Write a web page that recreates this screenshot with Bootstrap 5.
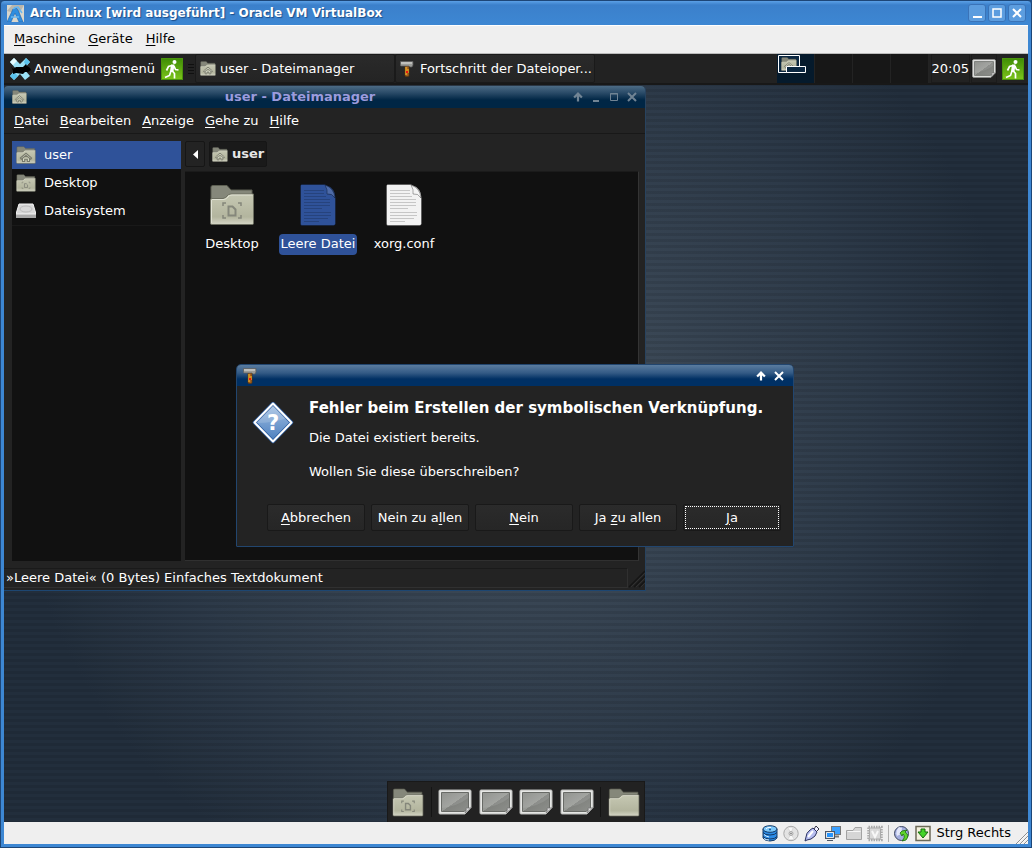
<!DOCTYPE html>
<html lang="de">
<head>
<meta charset="utf-8">
<meta name="viewport" content="width=device-width, initial-scale=1">
<title>Arch Linux [wird ausgeführt] - Oracle VM VirtualBox</title>
<link href="https://cdn.jsdelivr.net/npm/bootstrap@5.3.0/dist/css/bootstrap.min.css" rel="stylesheet">
<style>
body { font-family: "DejaVu Sans", sans-serif; font-size: 13px; line-height: 16px; color: #fff; background: #1f4f87; }
u { text-underline-offset: 2px; text-decoration-thickness: 1px; }
a, a:hover { color: inherit; text-decoration: none; }
button { color: inherit; padding: 0; border: 0; background: none; white-space: nowrap; }
svg { display: block; flex: none; }
/* host window */
.host { height: 100vh; border: 1px solid #1d4677; border-radius: 4px 4px 0 0; background: linear-gradient(#5ba0e6, #3b80cb 4px, #3d87d3 24px); padding: 0 3px 3px; }
.host-title { height: 24px; gap: 6px; padding: 0 2px 0 3px; font-size: 12px; font-weight: bold; text-shadow: 1px 1px 1px #1b4c88; }
.host-controls { gap: 2px; }
.host-btn { width: 18px; height: 18px; border: 1px solid #3a73b8; border-radius: 3px; background: #5c9ddf; }
.host-menu { height: 28px; gap: 13px; padding: 0 10px 2px; background: #efefef; color: #000; border-top: 1px solid #fff; }
.host-status { height: 22px; gap: 5px; background: #efefef; color: #000; }
.vsep { width: 1px; height: 17px; background: #b0b0b0; }
/* guest screen */
.screen { min-height: 0; background:
  repeating-linear-gradient(rgba(0,0,0,.09) 0 3px, transparent 3px 6px),
  radial-gradient(circle 505px at 50% 48%, #3f4f5e, #3a4755 30%, #2d3a49 70%, #222e3c 100%); }
.taskpanel { height: 32px; background: #222; border-top: 1px solid #bbb; border-bottom: 2px solid #181818; }
.appmenu { margin-right: 6px; }
.task { width: 200px; border: 1px solid #1a1a1a; border-radius: 2px; background: linear-gradient(#2a2a2a, #242424); }
.pager { width: 152px; margin-right: 2px; }
.pager-cell { background: #171717; border-right: 1px solid #232323; }
.pager-cell.current { background: #051a2c; }
.tray { border: 1px solid #1b1b1b; margin-right: 1px; }
.guest-win { background: #232323; position: absolute; }
.guest-title { height: 22px; font-weight: bold; color: #9b9bdd; }
.title-off { color: #718494; }
.fm { left: 0; top: 33px; width: 642px; height: 505px; border-right: 1px solid #28435f; border-bottom: 1px solid #1d4671; border-radius: 4px 4px 0 0; }
.fm .guest-title { border-radius: 4px 4px 0 0; background: linear-gradient(#4c6b85 0, #294a67 7px, #002645 14px); }
.fm-menu { height: 26px; gap: 11px; padding: 0 10px; border-bottom: 1px solid #181818; }
.fm-body { padding: 7px 6px 0 8px; }
.places { width: 169px; background: #111; }
.places hr { border-color: #333; }
.place { height: 28px; width: 100%; text-align: left; }
.place.selected, .iconlabel.selected { background: #2f5299; }
.pathbtn { height: 26px; padding: 0 2px; border: 1px solid #161616; border-radius: 2px; color: #e6e6e6; }
.pathbtn.current { background: #1a1a1a; }
.pane { background: #111; border-top: 1px solid #1b1b1b; border-right: 1px solid #343434; border-bottom: 1px solid #303030; }
.pane-item { width: 86px; }
.pane-icon { height: 50px; margin-bottom: 4px; }
.pane-icon.blue { color: #2f5299; }
.pane-icon.paper { color: #f2f2f2; }
.iconlabel { padding: 2px 2px 3px; border-radius: 4px; white-space: nowrap; }
.fm-status { height: 20px; padding-left: 2px; border-top: 1px solid #1a1a1a; border-right: 1px solid #303030; border-bottom: 1px solid #303030; }
.fm-foot { padding: 7px 0 2px; }
.dialog-win { left: 232px; top: 311px; width: 558px; height: 183px; border: 1px solid #22466f; border-radius: 5px 5px 1px 1px; }
.dialog-win .guest-title { height: 21px; padding: 0 9px 0 6px; border-radius: 4px 4px 0 0; background: linear-gradient(#5a7c9f 0, #335a85 8px, #003064 14px); }
.dlg-body { padding: 12px 0 0 15px; gap: 15px; }
.dlg-head { font-size: 15px; line-height: 20px; font-weight: bold; white-space: nowrap; margin-bottom: 12px; }
.dlg-body p { margin-bottom: 18px; }
.dlg-actions { gap: 6px; padding: 0 12px 15px 0; }
.dlg-btn { width: 98px; height: 27px; border: 1px solid #191919; border-radius: 2px; background: linear-gradient(#2b2b2b, #262626); }
.dlg-btn.focused { outline: 1px dotted #fff; outline-offset: -3px; }
.dock { height: 41px; width: 258px; background: #222; border: 1px solid #191919; border-bottom: 0; }
.dock-sep { width: 1px; height: 30px; background: #141414; }
</style>
</head>
<body>
<svg width="0" height="0" class="position-absolute" aria-hidden="true">
  <defs>
    <linearGradient id="gFold" x2="0" y2="1"><stop stop-color="#c6c8b3"/><stop offset=".75" stop-color="#b3b59e"/><stop offset="1" stop-color="#d5d6c6"/></linearGradient>
    <linearGradient id="gDesk" x2="1" y2="1"><stop stop-color="#858783"/><stop offset=".5" stop-color="#999b97"/><stop offset=".51" stop-color="#80827e"/><stop offset="1" stop-color="#8d8f8b"/></linearGradient>
    <linearGradient id="gExit" x2="0" y2="1"><stop stop-color="#3f8d05"/><stop offset="1" stop-color="#7cc41b"/></linearGradient>
    <linearGradient id="gQ" x2="0" y2="1"><stop stop-color="#a5c2e4"/><stop offset="1" stop-color="#4a7dbd"/></linearGradient>
    <symbol id="folder" viewBox="0 0 46 42" preserveAspectRatio="none">
      <path d="M2 40V3Q2 1.500 4 1.500H18L22 6H43V40Z" fill="#85877a" stroke="#5d5f52"/>
      <path d="M1.500 39.500V16Q1.500 14.500 3 14.500H14Q17 14 18 12Q19 10 22 10H44.500V39.500Q44.500 40.500 43 40.500H3Q1.500 40.500 1.500 39.500Z" fill="url(#gFold)" stroke="#6c6e60"/>
      <path d="M2.500 39V16Q2.500 15.500 4 15.500H15Q18 15 19 13Q20 11 23 11H43.500" fill="none" stroke="#e0e1d3"/>
    </symbol>
    <symbol id="folderdoc" viewBox="0 0 46 42" preserveAspectRatio="none">
      <use href="#folder" width="46" height="42"/>
      <path d="M19.500 22.500H23.500L26.500 25.500V31.500H19.500Z" fill="none" stroke="#85877b" stroke-width="2"/>
      <path d="M14 22V19H17M29 19H32V22M32 31V34H29M17 34H14V31" fill="none" stroke="#85877b" stroke-width="1.500"/>
    </symbol>
    <symbol id="folderhome" viewBox="0 0 46 42" preserveAspectRatio="none">
      <use href="#folder" width="46" height="42"/>
      <path d="M10 28 23 17 36 28 34 31 23 22 12 31ZM15 29V36H20V31H26V36H31V29" fill="#dcdecb" stroke="#77796b" stroke-width="2.500"/>
    </symbol>
    <symbol id="desk" viewBox="0 0 34 26" preserveAspectRatio="none">
      <path d="M1 2Q1 1 2 1H32Q33 1 33 2V19L27 25H2Q1 25 1 24Z" fill="#e6e7e5" stroke="#b9bab8"/>
      <path d="M3.500 3.500H30.500V19L26 22.500H3.500Z" fill="url(#gDesk)" stroke="#686a66"/>
      <path d="M4 19Q20 17 30 9V4H4Z" fill="#fff" opacity=".1"/>
      <path d="M27 24Q29 21 28 19H33Z" fill="#ddd" stroke="#777" stroke-width=".8"/>
    </symbol>
    <symbol id="exit" viewBox="0 0 22 22">
      <rect x=".5" y=".5" width="21" height="21" fill="url(#gExit)" stroke="#4a930c"/>
      <circle cx="13.500" cy="4" r="2" fill="#fff"/>
      <path d="M11 7.500 7.500 8.500 5.500 12.500M10.500 12 13.500 15.500 13.500 20.500M10 13 8.500 17.500 4 19.500M13 8 14.500 11.500 17.500 12" fill="none" stroke="#fff" stroke-width="1.700"/>
      <path d="M10 6.500H13.500L12.500 13.500H9Z" fill="#fff"/>
    </symbol>
    <symbol id="hammer" viewBox="0 0 14 16">
      <path d="M5 5H9V15Q7 16 5 15Z" fill="#a4611c" stroke="#5a340d" stroke-width=".7"/>
      <path d="M6 6V14M8 8V12" stroke="#ffbf2c"/><path d="M6 10H8V12H6Z" fill="#e11"/>
      <path d="M.5.5H13V4L12 6H10L9 5H1Q0 5 .5 3Z" fill="#9b9c98" stroke="#5b5b5b" stroke-width=".7"/><path d="M1 2H12" stroke="#e2e2e0"/>
    </symbol>
    <symbol id="page" viewBox="0 0 38 44">
      <path d="M2.500 1.500H26Q36.500 5 36.500 15V40.500Q36.500 42.500 34.500 42.500H3Q1.500 42.500 1.500 41V3Q1.500 1.500 2.500 1.500Z" fill="currentColor" stroke="#000" stroke-opacity=".25"/>
      <path d="M5 7.500H25M5 10.500H25M5 13.500H27M5 16.500H31M5 19.500H31M5 22.500H31M5 25.500H23M5 29.500H32M5 32.500H32M5 35.500H29M5 38.500H20" stroke="#000" stroke-opacity=".18"/>
      <path d="M26 2Q29 7 28 11Q33 10 36 15Q35 5 26 2Z" fill="#fff" fill-opacity=".15" stroke="#000" stroke-opacity=".4" stroke-width=".8"/>
    </symbol>
    <symbol id="up" viewBox="0 0 9 9"><path d="M4.500 8.500V2M1 5 4.500 1.500 8 5" fill="none" stroke="currentColor" stroke-width="2"/></symbol>
    <symbol id="cross" viewBox="0 0 10 10"><path d="M1 1 9 9M9 1 1 9" fill="none" stroke="currentColor" stroke-width="2"/></symbol>
  </defs>
</svg>

<div class="host d-flex flex-column">
  <header class="host-title d-flex align-items-center flex-shrink-0">
    <svg width="17" height="17" viewBox="0 0 17 17"><path d="M0 0H17V17H0Z" fill="#d9d6cc"/><path d="M0 6 5 0H17L12 9Z" fill="#b9b6ac"/><path d="M0 17 6 4Q9 1 11 5L16 17H12L8 8 4 17Z" fill="#2f8ee0" stroke="#1c62ad" stroke-width=".6"/><path d="M4 12H12M6 4Q8 2 11 2L15 8" fill="none" stroke="#69b6ef" stroke-width="1.500"/></svg>
    <span class="flex-grow-1">Arch Linux [wird ausgeführt] - Oracle VM VirtualBox</span>
    <div class="host-controls d-flex">
      <button class="host-btn" aria-label="Minimieren"><svg width="16" height="16"><path d="M4 12H13" stroke="#fff" stroke-width="2"/></svg></button>
      <button class="host-btn" aria-label="Maximieren"><svg width="16" height="16"><path d="M4 4H12V12H4Z" fill="none" stroke="#fff" stroke-width="1.500"/></svg></button>
      <button class="host-btn" aria-label="Schließen"><svg width="16" height="16"><path d="M4 4 12 12M12 4 4 12" stroke="#fff" stroke-width="2"/></svg></button>
    </div>
  </header>
  <nav class="host-menu d-flex align-items-center flex-shrink-0">
    <a href="#"><u>M</u>aschine</a><a href="#"><u>G</u>eräte</a><a href="#"><u>H</u>ilfe</a>
  </nav>

  <main class="screen flex-grow-1 position-relative d-flex flex-column justify-content-between align-items-center">
    <div class="taskpanel w-100 d-flex align-items-center">
      <button class="appmenu d-flex align-items-center ms-1">
        <svg width="26" height="24" viewBox="0 0 26 24"><path d="M2 5 6 1 12 7 18 1 22 5 16 12 22 19 17 23 12 17 6 23 2 19 8 12Z" fill="#9be1f6"/><path d="M2 5 6 1 9 4 5 8Z" fill="#e5fbff"/><path d="M16 5 18 1 22 5 18 9ZM2 19 6 23 10 19 6 15Z" fill="#5ac2ec"/><path d="M3 9 5 12 8 10 15 10 18 7 19 9 22 11 23 13 20 15 17 15 15 17 8 16 5 17 5 14Z" fill="#000"/></svg>
        <span>Anwendungsmenü</span></button>
      <button aria-label="Abmelden"><svg width="22" height="22"><use href="#exit"/></svg></button>
      <svg width="8" height="12" class="ms-1"><path d="M1 1.500H7M1 4.500H7M1 7.500H7M1 10.500H7" stroke="#101010"/></svg>
      <button class="task h-100 d-flex align-items-center px-1"><svg width="16" height="15" class="me-1"><use href="#folderhome"/></svg>user - Dateimanager</button>
      <button class="task h-100 d-flex align-items-center px-1"><svg width="16" height="16" class="me-1" viewBox="1 0 14 16"><use href="#hammer" width="14" height="16"/></svg>Fortschritt der Dateioper...</button>
      <div class="pager h-100 d-flex ms-auto">
        <div class="pager-cell current w-25"><svg width="30" height="20"><path d="M1.500 1.500H22.500V18.500H1.500Z" fill="#0b2741" stroke="#fff"/><use href="#folderhome" x="4" y="3" width="16" height="14"/><path d="M9.500 12.500H28.500V18.500H9.500Z" fill="#0b2741" stroke="#fff"/></svg></div>
        <div class="pager-cell w-25"></div><div class="pager-cell w-25"></div><div class="pager-cell w-25"></div>
      </div>
      <div class="tray h-100 d-flex align-items-center">20:05</div>
      <button class="tray h-100" aria-label="Desktop anzeigen"><svg width="24" height="19"><use href="#desk"/></svg></button>
      <button class="ms-1 me-1" aria-label="Abmelden"><svg width="22" height="22"><use href="#exit"/></svg></button>
    </div>

    <section class="guest-win fm d-flex flex-column">
      <div class="guest-title d-flex align-items-center px-2 flex-shrink-0">
        <svg width="15" height="14"><use href="#folderhome"/></svg>
        <span class="flex-grow-1 text-center">user - Dateimanager</span>
        <div class="title-off d-flex gap-2"><svg width="10" height="10"><use href="#up"/></svg><svg width="10" height="10"><path d="M2 9H8" stroke="currentColor" stroke-width="2"/></svg><svg width="10" height="10"><path d="M1.500 1.500H8.500V8.500H1.500ZM1 2H9" fill="none" stroke="currentColor"/></svg><svg width="10" height="10"><use href="#cross"/></svg></div>
      </div>
      <nav class="fm-menu d-flex align-items-center flex-shrink-0">
        <a href="#"><u>D</u>atei</a><a href="#"><u>B</u>earbeiten</a><a href="#"><u>A</u>nzeige</a><a href="#"><u>G</u>ehe zu</a><a href="#"><u>H</u>ilfe</a>
      </nav>
      <div class="fm-body flex-grow-1 d-flex">
        <aside class="places">
          <button class="place selected d-flex align-items-center px-1"><svg width="20" height="18" class="me-2"><use href="#folderhome"/></svg>user</button>
          <button class="place d-flex align-items-center px-1"><svg width="20" height="18" class="me-2"><use href="#folderdoc"/></svg>Desktop</button>
          <button class="place d-flex align-items-center px-1"><svg width="20" height="16" viewBox="0 0 20 16" class="me-2"><path d="M3 1H17L20 11V15H0V11Z" fill="#d8d8d8"/><path d="M0 11H20V15H0Z" fill="#a9a9a9"/><path d="M3 1H17L20 11H0Z" fill="none" stroke="#f4f4f4"/><ellipse cx="10" cy="6" rx="6" ry="3" fill="none" stroke="#bbb"/></svg>Dateisystem</button>
          <hr class="mt-0 mb-0">
        </aside>
        <div class="flex-grow-1 d-flex flex-column ms-1">
          <div class="d-flex gap-1 mb-1">
            <button class="pathbtn" aria-label="Zurück"><svg width="14" height="12"><path d="M10 2V11L5 6.500Z" fill="#fff"/></svg></button>
            <button class="pathbtn current d-flex align-items-center fw-bold"><svg width="16" height="15" class="me-1"><use href="#folderhome"/></svg>user</button>
          </div>
          <div class="pane flex-grow-1 d-flex align-items-start pt-2 px-1">
            <div class="pane-item d-flex flex-column align-items-center"><div class="pane-icon d-flex align-items-center"><svg width="46" height="42"><use href="#folderdoc"/></svg></div><span class="iconlabel">Desktop</span></div>
            <div class="pane-item d-flex flex-column align-items-center"><div class="pane-icon blue d-flex align-items-center"><svg width="38" height="44"><use href="#page"/></svg></div><span class="iconlabel selected">Leere Datei</span></div>
            <div class="pane-item d-flex flex-column align-items-center"><div class="pane-icon paper d-flex align-items-center"><svg width="38" height="44"><use href="#page"/></svg></div><span class="iconlabel">xorg.conf</span></div>
          </div>
        </div>
      </div>
      <footer class="fm-foot d-flex flex-shrink-0">
        <div class="fm-status d-flex align-items-center flex-grow-1">»Leere Datei« (0 Bytes) Einfaches Textdokument</div>
        <svg width="17" height="20"><path d="M1 19 17 3M6 19 17 8M11 19 17 13" stroke="#151515" stroke-width="1.500"/><path d="M3 19 17 5M8 19 17 10M13 19 17 15" stroke="#303030"/></svg>
      </footer>
    </section>

    <section class="guest-win dialog-win d-flex flex-column" role="dialog" aria-labelledby="dlgHead">
      <div class="guest-title d-flex align-items-center text-white">
        <svg width="14" height="16"><use href="#hammer"/></svg>
        <div class="ms-auto d-flex gap-2"><svg width="10" height="10"><use href="#up"/></svg><svg width="10" height="10"><use href="#cross"/></svg></div>
      </div>
      <div class="dlg-body d-flex">
        <svg width="42" height="44" viewBox="0 1 42 44" class="mt-1"><path d="M21 1.500 39.500 20.500 21 39.500 2.500 20.500Z" transform="translate(0 1)" fill="url(#gQ)" stroke="#2b5b9e" stroke-width="3.500" stroke-linejoin="round"/><path d="M21 2.500 39.500 21.500 21 40.500 2.500 21.500Z" fill="none" stroke="#fff" stroke-width="2" stroke-linejoin="round"/><path d="M4 22Q22 22 35 17L21 4Z" fill="#fff" opacity=".15"/><text x="21" y="29" fill="#fff" font-weight="bold" font-size="21" text-anchor="middle">?</text></svg>
        <div>
          <div id="dlgHead" class="dlg-head">Fehler beim Erstellen der symbolischen Verknüpfung.</div>
          <p>Die Datei existiert bereits.</p>
          <p>Wollen Sie diese überschreiben?</p>
        </div>
      </div>
      <div class="dlg-actions d-flex justify-content-end mt-auto">
        <button class="dlg-btn"><u>A</u>bbrechen</button><button class="dlg-btn">Nein zu a<u>l</u>len</button><button class="dlg-btn"><u>N</u>ein</button><button class="dlg-btn">Ja <u>z</u>u allen</button><button class="dlg-btn focused"><u>J</u>a</button>
      </div>
    </section>

    <div class="dock d-flex align-items-center justify-content-between px-1">
      <svg width="32" height="29"><use href="#folderdoc"/></svg><span class="dock-sep"></span>
      <svg width="34" height="26"><use href="#desk"/></svg><svg width="34" height="26"><use href="#desk"/></svg><svg width="34" height="26"><use href="#desk"/></svg><svg width="34" height="26"><use href="#desk"/></svg>
      <span class="dock-sep"></span><svg width="32" height="29"><use href="#folder"/></svg>
    </div>
  </main>

  <footer class="host-status d-flex align-items-center justify-content-end flex-shrink-0">
    <svg width="16" height="17" viewBox="0 0 16 17"><path d="M1 4V13Q3 16 8 16T15 13V4Z" fill="#2b8be6" stroke="#153a66"/><path d="M1 7.500Q3 10 8 10T15 7.500M1 11.500Q3 14 8 14T15 11.500" fill="none" stroke="#153a66"/><path d="M2 9.500Q4 11.500 7 12M2 13.500Q4 15 7 15" fill="none" stroke="#d8f0ff"/><ellipse cx="8" cy="4" rx="7" ry="3.300" fill="#7cc8fb" stroke="#153a66"/><path d="M4 4Q5 2 9 2.500" stroke="#fff" fill="none"/><circle cx="8" cy="4.500" r="1" fill="#17568f"/></svg>
    <svg width="16" height="17" viewBox="0 0 16 17"><circle cx="8" cy="8.500" r="7.200" fill="#e3e3e3" stroke="#a9a9a9"/><path d="M5 3 8 8 10 3M5 14 8 9 11 14" fill="#f8f8f8" stroke="#ccc" stroke-width=".6"/><circle cx="8" cy="8.500" r="2" fill="#ddd" stroke="#aaa"/><circle cx="8" cy="8.500" r=".8" fill="#777"/></svg>
    <svg width="16" height="17" viewBox="0 0 16 17"><path d="M10 4 12 1 15 4 12 7Z" fill="#eef" stroke="#334"/><path d="M1 16 2 12Q2 8 6 5L9 3 13 7 11 11Q7 15 3 15Z" fill="#b6bdf0" stroke="#2c3360"/><path d="M4 12 9 6" stroke="#fff" stroke-width="2"/></svg>
    <svg width="16" height="17" viewBox="0 0 16 17"><rect x="6.500" y="1.500" width="9" height="8" fill="#3ba0ff" stroke="#777"/><path d="M9 11.500H14" stroke="#777" stroke-width="2"/><rect x=".5" y="6.500" width="9" height="7" fill="#2593fb" stroke="#4c5665"/><path d="M1.500 7.500H8.500V12.500H1.500Z" fill="none" stroke="#e8e8e8"/><path d="M2 15.500H8" stroke="#4c5665"/></svg>
    <svg width="16" height="17" viewBox="0 0 16 17"><path d="M.5 14.500V5.500H7L9 2.500H15.500V14.500Z" fill="#d5d5d5" stroke="#a2a2a2"/><path d="M1.500 6.500H14.500" stroke="#f6f6f6"/></svg>
    <svg width="16" height="17" viewBox="0 0 16 17"><rect x="1.500" y="2" width="13" height="13" fill="none" stroke="#aaa" stroke-width="2.500" stroke-dasharray="1.500 1"/><rect x="2.500" y="3" width="11" height="11" rx="1" fill="#d9d9d9" stroke="#aaa"/><path d="M5 6 8 12 11 6" fill="none" stroke="#f8f8f8" stroke-width="2"/></svg>
    <span class="vsep"></span>
    <svg width="16" height="17" viewBox="0 0 16 17"><circle cx="7.500" cy="8.500" r="7" fill="#a3aede" stroke="#3c4560"/><path d="M5 2Q1 6 3 11L7 9 8 3Z" fill="#e2e6fa"/><path d="M8 6 13 5 11 7Q16 10 12 15L8 16Q12 12 9 9L8 11 6 8Z" fill="#5ed32c" stroke="#1b6b0c" stroke-width=".8"/></svg>
    <svg width="16" height="17" viewBox="0 0 16 17"><rect x="1" y="1.500" width="14" height="14" fill="#f4f1de" stroke="#6d6a58" stroke-width="1.500"/><path d="M6 4H10V7H13L8 13 3 7H6Z" fill="#45d427" stroke="#146c0c"/></svg>
    <span>Strg Rechts</span>
    <svg width="12" height="22"><path d="M0 22 12 10M4 22 12 14M8 22 12 18" stroke="#8f8f8f"/><path d="M1 22 12 11M5 22 12 15M9 22 12 19" stroke="#fff" opacity=".7"/></svg>
  </footer>
</div>
<script src="https://cdn.jsdelivr.net/npm/bootstrap@5.3.0/dist/js/bootstrap.bundle.min.js"></script>
</body>
</html>
